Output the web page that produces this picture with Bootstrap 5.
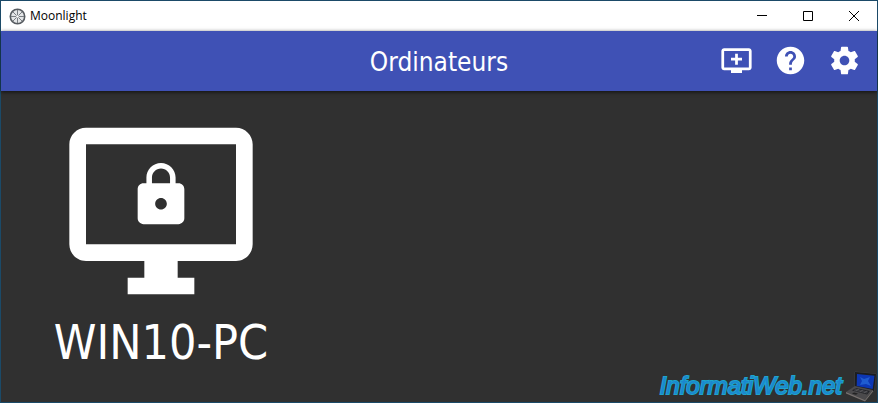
<!DOCTYPE html>
<html lang="fr">
<head>
<meta charset="utf-8">
<meta name="viewport" content="width=device-width, initial-scale=1">
<title>Moonlight</title>
<link href="https://cdn.jsdelivr.net/npm/bootstrap@5.3.0/dist/css/bootstrap.min.css" rel="stylesheet">
<style>
body { font-family: Tahoma, "DejaVu Sans Condensed", "Noto Sans", sans-serif; background: #303030; }
.window { border: 1px solid #1b4a68; background: #303030; }
.titlebar { height: 30px; background: #fff; color: #000; padding-left: 8px; }
.titlebar h1 { font: 12px/16px "Open Sans", sans-serif; }
.win-btn { width: 46px; height: 30px; color: #000; }
.toolbar { height: 60px; background: #3f51b5; box-shadow: 0 1px 4px rgba(0,0,0,.7); display: grid; grid-template-columns: 1fr auto 1fr; }
.toolbar h2 { font-size: 26px; line-height: 38px; padding-top: 2px; }
.tools { padding-right: 6px; }
.tool-btn { width: 54px; height: 58px; }
.host { margin: 20px 0 0 40px; width: 240px; }
.host-name { font-size: 48px; line-height: 62px; }
.brand { font: italic 24px/32px "Liberation Sans", Arial, sans-serif; color: #1b87cf; -webkit-text-stroke: 2px #1ea4cc; paint-order: stroke fill; }
.brand:hover { color: #1b87cf; }
.brand svg { margin-left: 3px; }
</style>
</head>
<body>
<div class="window min-vh-100 d-flex flex-column">
  <header class="titlebar d-flex align-items-center">
    <svg width="17" height="17" viewBox="0 0 17 17" fill="none" aria-hidden="true">
      <circle cx="8.500" cy="8.500" r="7.200" fill="#e4e6e8" stroke="#565b60" stroke-width="1.600"/>
      <path d="M8.500 2v13M2 8.500h13M4 4l9 9M13 4l-9 9" stroke="#7a7f84" stroke-width="1"/>
      <circle cx="8.500" cy="8.500" r="1.300" fill="#fff"/>
    </svg>
    <h1 class="mb-0 ms-1 me-auto">Moonlight</h1>
    <button class="btn win-btn p-0 border-0 rounded-0 d-flex align-items-center justify-content-center" type="button" aria-label="Réduire">
      <svg width="10" height="10" viewBox="0 0 10 10" stroke="#000"><path d="M0 4.500h10"/></svg>
    </button>
    <button class="btn win-btn p-0 border-0 rounded-0 d-flex align-items-center justify-content-center" type="button" aria-label="Agrandir">
      <svg width="10" height="10" viewBox="0 0 10 10" stroke="#000" fill="none"><path d="M.5.5h9v9h-9z"/></svg>
    </button>
    <button class="btn win-btn p-0 border-0 rounded-0 d-flex align-items-center justify-content-center" type="button" aria-label="Fermer">
      <svg width="10" height="10" viewBox="0 0 10 10" stroke="#000"><path d="M0 0l10 10M10 0L0 10"/></svg>
    </button>
  </header>

  <nav class="toolbar align-items-center text-white">
    <span></span>
    <h2 class="mb-0 fw-normal">Ordinateurs</h2>
    <div class="tools d-flex justify-content-end align-self-start">
      <button class="btn tool-btn p-0 border-0 text-white d-flex align-items-center justify-content-center" type="button" aria-label="Ajouter un ordinateur">
        <svg width="33" height="33" viewBox="0 0 24 24" fill="currentColor"><path d="M21 3H3c-1.110 0-2 .89-2 2v12c0 1.100.89 2 2 2h5v2h8v-2h5c1.100 0 1.990-.9 1.990-2L23 5c0-1.100-.9-2-2-2zm0 14H3V5h18v12zm-5-7v2h-3v3h-2v-3H8v-2h3V7h2v3h3z"/></svg>
      </button>
      <button class="btn tool-btn p-0 border-0 text-white d-flex align-items-center justify-content-center" type="button" aria-label="Aide">
        <svg width="33" height="33" viewBox="0 0 24 24" fill="currentColor"><path d="M12 2C6.480 2 2 6.480 2 12s4.480 10 10 10 10-4.480 10-10S17.520 2 12 2zm1 17h-2v-2h2v2zm2.070-7.750l-.9.920C13.450 12.900 13 13.500 13 15h-2v-.5c0-1.100.45-2.100 1.170-2.830l1.240-1.260c.37-.36.59-.86.59-1.410 0-1.100-.9-2-2-2s-2 .9-2 2H8c0-2.210 1.790-4 4-4s4 1.790 4 4c0 .88-.36 1.680-.93 2.250z"/></svg>
      </button>
      <button class="btn tool-btn p-0 border-0 text-white d-flex align-items-center justify-content-center" type="button" aria-label="Paramètres">
        <svg width="33" height="33" viewBox="0 0 24 24" fill="currentColor"><path d="M19.430 12.980c.04-.32.07-.64.07-.98s-.03-.66-.07-.98l2.110-1.650c.19-.15.24-.42.12-.64l-2-3.460c-.12-.22-.39-.3-.61-.22l-2.490 1c-.52-.4-1.080-.73-1.690-.98l-.38-2.650C14.460 2.180 14.250 2 14 2h-4c-.25 0-.46.18-.49.42l-.38 2.650c-.61.25-1.170.59-1.690.98l-2.490-1c-.23-.09-.49 0-.61.22l-2 3.460c-.13.22-.07.49.12.64l2.110 1.650c-.04.32-.07.65-.07.98s.03.66.07.98l-2.110 1.650c-.19.15-.24.42-.12.64l2 3.460c.12.22.39.3.61.22l2.490-1c.52.4 1.080.73 1.690.98l.38 2.650c.03.24.24.42.49.42h4c.25 0 .46-.18.49-.42l.38-2.650c.61-.25 1.170-.59 1.690-.98l2.490 1c.23.09.49 0 .61-.22l2-3.460c.12-.22.07-.49-.12-.64l-2.110-1.650zM12 15.500c-1.930 0-3.500-1.570-3.500-3.500s1.570-3.500 3.500-3.500 3.500 1.570 3.500 3.500-1.570 3.500-3.500 3.500z"/></svg>
      </button>
    </div>
  </nav>

  <main class="flex-grow-1 d-flex justify-content-between">
    <button class="btn host p-0 border-0 rounded-0 text-white align-self-start d-flex flex-column align-items-center" type="button">
      <svg width="200" height="200" viewBox="0 0 24 24" fill="currentColor" aria-hidden="true">
        <path d="M21 2H3c-1.100 0-2 .9-2 2v12c0 1.100.9 2 2 2h7v2H8v2h8v-2h-2v-2h7c1.100 0 2-.9 2-2V4c0-1.100-.9-2-2-2zm0 14H3V4h18v12z"/>
        <path transform="translate(7.800 5.880) scale(.35)" d="M18 8h-1V6c0-2.760-2.240-5-5-5S7 3.240 7 6v2H6c-1.100 0-2 .9-2 2v10c0 1.100.9 2 2 2h12c1.100 0 2-.9 2-2V10c0-1.100-.9-2-2-2zm-6 9c-1.100 0-2-.9-2-2s.9-2 2-2 2 .9 2 2-.9 2-2 2zm3.100-9H8.900V6c0-1.710 1.390-3.100 3.100-3.100 1.710 0 3.100 1.390 3.100 3.100v2z"/>
      </svg>
      <span class="host-name text-nowrap">WIN10-PC</span>
    </button>
    <a class="brand text-decoration-none align-self-end d-flex align-items-center" href="#">InformatiWeb.net
      <svg width="32" height="32" viewBox="0 0 32 32" stroke-width="0" aria-hidden="true">
        <path d="M10 2l21 2-2 17-19-4z" fill="#1b1d21" stroke="#4b4d51" stroke-width=".6"/>
        <path d="M12 4l17.500 1.800-1.800 13.200-16-3z" fill="#0d37b4"/>
        <path d="M15 7l4 2 6-2-2 4 3 5-5-2-6 1 2-4z" fill="#1f5cd0"/>
        <path d="M10 16l18 4-8 10L1 22z" fill="#4b4a4c"/>
        <path d="M11 18l14 3-3 3.500L7 20.500z" fill="#222327"/>
        <path d="M10 19l13 3M9 20l13 3M14 19l-3 2M18 20l-3 2M22 21l-3 2" stroke="#68696d" stroke-width=".5"/>
        <path d="M9 22.500l4 1-2 1.300-4-1z" fill="#222"/>
        <path d="M1 22l19 8 8-10v1.500L20 31.500 1 23.500z" fill="#77716f"/>
      </svg>
    </a>
  </main>
</div>
<script src="https://cdn.jsdelivr.net/npm/bootstrap@5.3.0/dist/js/bootstrap.bundle.min.js"></script>
</body>
</html>
